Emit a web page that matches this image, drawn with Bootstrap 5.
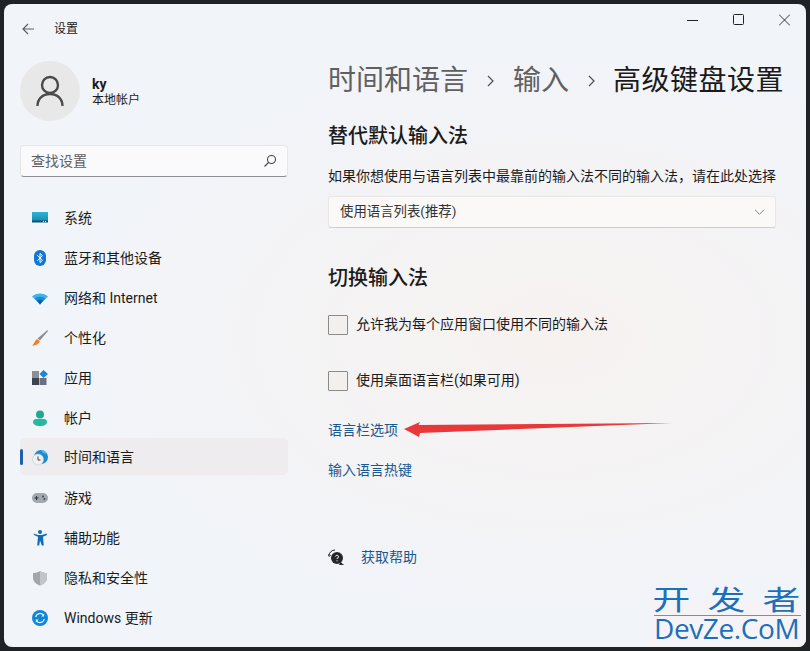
<!DOCTYPE html>
<html lang="zh-CN">
<head>
  <meta charset="UTF-8">
  <title>设置</title>
  <link href="https://cdn.jsdelivr.net/npm/bootstrap@5.3.3/dist/css/bootstrap.min.css" rel="stylesheet">
  <style>
    body {
      background: #1f2326;
      font-family: Roboto, "Noto Sans CJK SC", sans-serif;
      font-size: 14px;
      color: #1b1b1b;
      height: 651px;
      overflow: hidden;
    }

    .win {
      position: relative;
      margin: 4px 4px 4px 4px;
      height: 643px;
      border-radius: 8px;
      overflow: hidden;
      background: radial-gradient(ellipse at 68% 52%, #f7f2f0 0, rgba(247, 242, 240, 0) 62%), #f1f4f9;
    }

    .side-pane {
      width: 300px;
      padding: 0 16px;
    }

    .back-row {
      height: 48px;
      padding: 2px 0 0 2px;
      gap: 20px;
      font-size: 12px;
    }

    .me-row {
      margin-top: 9px;
      height: 60px;
      gap: 12px;
    }

    .me-pic {
      width: 60px;
      height: 60px;
      background: #e8e8e9;
    }

    .me-name {
      font-size: 14px;
      font-weight: 700;
      line-height: 16px;
      margin-top: 1px;
    }

    .me-sub {
      font-size: 12px;
      line-height: 16px;
    }

    .find-box {
      margin-top: 24px;
      height: 32px;
      margin-bottom: 23px;
    }

    .find-box .form-control {
      height: 32px;
      padding: 0 30px 0 10px;
      font-size: 14px;
      border-radius: 4px;
      border: 1px solid #e6e6e8;
      border-bottom-color: #8e8e90;
      background: #fafafc;
      box-shadow: none;
      color: #333;
    }

    .find-box .form-control::placeholder {
      color: #606060;
    }

    .find-ico {
      position: absolute;
      right: 11px;
      top: 9px;
    }

    .side-link {
      position: relative;
      height: 36px;
      margin-bottom: 4px;
      padding: 0 0 0 12px;
      gap: 16px;
      color: #1b1b1b;
      font-size: 14px;
      border-radius: 5px;
    }

    .side-link.on {
      height: 37px;
      margin-top: -2px;
      margin-bottom: 5px;
      padding-top: 2px;
      background: #eeecee;
    }

    .side-link.on::before {
      content: "";
      position: absolute;
      left: 0;
      top: 11px;
      width: 3px;
      height: 16px;
      border-radius: 2px;
      background: #1a62ac;
    }

    .main-pane {
      min-width: 0;
      padding: 0 30px 0 24px;
    }

    .win-btns {
      height: 32px;
      padding-top: 10px;
      margin-right: -30px;
      padding-right: 16px;
      gap: 35px;
    }

    .crumbs {
      margin-top: 23px;
      height: 44px;
      font-size: 28px;
      line-height: 44px;
      color: #606060;
      white-space: nowrap;
    }

    .crumbs .sep {
      width: 45px;
      flex-shrink: 0;
    }

    .crumbs .cur {
      color: #1b1b1b;
      margin-left: -1px;
      letter-spacing: .5px;
    }

    .sec-title {
      font-size: 20px;
      font-weight: 500;
      line-height: 28px;
      margin: 0;
      color: #1b1b1b;
    }

    .first-title {
      margin-top: 19px;
    }

    .hint {
      margin: 16px 0 0;
      line-height: 20px;
      white-space: nowrap;
    }

    .lang-pick {
      margin-top: 10px;
      height: 32px;
      padding: 1px 30px 0 11px;
      font-size: 13.4px;
      font-family: Roboto, "Noto Sans CJK SC", sans-serif;
      color: #333;
      border: 1px solid #e8e6e6;
      border-bottom-color: #cfcdcd;
      border-radius: 3px;
      background-color: #fbf9f8;
      background-image: url("data:image/svg+xml,%3Csvg xmlns='http://www.w3.org/2000/svg' viewBox='0 0 12 8'%3E%3Cpath fill='none' stroke='%23777' stroke-width='1' d='M1 1.500l5 5 5-5'/%3E%3C/svg%3E");
      background-position: right 10px center;
      background-size: 11px 8px;
      box-shadow: none;
    }

    .switch-title {
      margin-top: 36px;
    }

    .opt-row {
      height: 20px;
      gap: 8px;
      margin: 0;
      padding: 0;
      min-height: 0;
    }

    .opt-first {
      margin-top: 23px;
    }

    .opt-second {
      margin-top: 36px;
    }

    .opt-row .form-check-label {
      margin-top: -2px;
    }

    .opt-row .form-check-input[type=checkbox] {
      width: 20px;
      height: 20px;
      margin: 0;
      float: none;
      border: 1px solid #8a8a8a;
      border-radius: 1px;
      background-color: #f2efed;
    }

    .plain-link {
      display: block;
      color: #175a92;
      text-decoration: none;
      line-height: 20px;
    }

    .link-first {
      margin-top: 29px;
    }

    .link-second {
      margin-top: 20px;
    }

    .help-row {
      gap: 17px;
      margin-top: 67px;
    }

    .red-arrow {
      position: absolute;
      left: 400px;
      top: 415px;
    }

    .stamp {
      position: absolute;
      right: -4px;
      bottom: -4px;
      width: 160px;
      height: 49px;
      background: #f6f3f6;
    }

    .stamp-box {
      position: absolute;
      left: 650px;
      top: 581px;
      width: 147px;
      color: #1c70ba;
    }

    .stamp-cn {
      height: 31px;
      line-height: 33px;
      font-size: 27px;
      border-bottom: 1px solid #4d9cd6;
      padding: 0 6px 0 4px;
    }

    .stamp-cn span {
      display: inline-block;
      transform: scaleX(1.4);
    }

    .stamp-en {
      font-size: 28px;
      line-height: 25px;
      letter-spacing: -.4px;
      white-space: nowrap;
      font-family: "Open Sans", Roboto, sans-serif;
    }
  </style>
</head>
<body>

<div class="win d-flex">

  <!-- Sidebar -->
  <div class="side-pane flex-shrink-0">
    <div class="back-row d-flex align-items-center">
      <svg width="12" height="12" viewBox="0 0 12 12" fill="none" stroke="#5c5f63" stroke-width="1.2"><path d="M12 6H1M6 1 1 6l5 5"/></svg>
      <span>设置</span>
    </div>

    <div class="me-row d-flex align-items-center">
      <div class="me-pic rounded-circle d-flex align-items-center justify-content-center flex-shrink-0">
        <svg width="28" height="32" viewBox="0 0 28 32" fill="none" stroke="#4a4a4c" stroke-width="2.4"><circle cx="14" cy="10" r="8"/><path d="M1.500 31c0-7 5-12 12.500-12s12.500 5 12.500 12"/></svg>
      </div>
      <div>
        <div class="me-name">ky</div>
        <div class="me-sub">本地帐户</div>
      </div>
    </div>

    <div class="find-box position-relative">
      <input type="text" class="form-control" placeholder="查找设置">
      <svg class="find-ico" width="14" height="14" viewBox="0 0 14 14" fill="none" stroke="#444" stroke-width="1.1"><circle cx="8.500" cy="5.500" r="4"/><path d="M5.500 8.500 1.500 12.500"/></svg>
    </div>

    <nav class="nav flex-column flex-nowrap">
      <a class="nav-link side-link d-flex align-items-center" href="#">
        <svg width="16" height="16" viewBox="0 0 16 16"><defs><linearGradient id="g1" x1="0" y1="0" x2="0" y2="1"><stop offset="0" stop-color="#2fb5d6"/><stop offset="1" stop-color="#1388b0"/></linearGradient></defs><rect y="2" width="16" height="10" fill="url(#g1)"/><rect y="10.500" width="16" height="2" fill="#15506e"/><rect x="11" y="11" width="1" height="1" fill="#bfe"/><rect x="13" y="11" width="1" height="1" fill="#bfe"/></svg>
        <span>系统</span>
      </a>
      <a class="nav-link side-link d-flex align-items-center" href="#">
        <svg width="16" height="16" viewBox="0 0 16 16"><rect x="2" y="0" width="12" height="16" rx="6" fill="#0f78d4"/><path d="M5.200 5.200 10.500 10.300 8 12.600V3.400L10.500 5.700 5.200 10.800" fill="none" stroke="#fff" stroke-width="1"/></svg>
        <span>蓝牙和其他设备</span>
      </a>
      <a class="nav-link side-link d-flex align-items-center" href="#">
        <svg width="16" height="16" viewBox="0 0 16 16"><path d="M0 6.500C4 2.500 12 2.500 16 6.500L8 14.500Z" fill="#3fb4ec"/><path d="M2.800 8.500C5.500 6 10.500 6 13.200 8.500L8 14.500Z" fill="#1b8ad8"/><path d="M5.300 10.600C6.800 9.500 9.200 9.500 10.700 10.600L8 14.500Z" fill="#0f5ea8"/></svg>
        <span>网络和 Internet</span>
      </a>
      <a class="nav-link side-link d-flex align-items-center" href="#">
        <svg width="16" height="16" viewBox="0 0 16 16"><path d="M15.500 0 16 1 8 10.500 5.500 8.500Z" fill="#8d8f93"/><path d="M5 9 7.800 11.200C7 14 3.500 15.500 0 15.500 2.500 14 2.500 10.500 5 9Z" fill="#f0812a"/></svg>
        <span>个性化</span>
      </a>
      <a class="nav-link side-link d-flex align-items-center" href="#">
        <svg width="16" height="16" viewBox="0 0 16 16"><rect x="0" y="1" width="7" height="7" fill="#8f8d96"/><rect x="0" y="8" width="7" height="7" fill="#3d4450"/><rect x="7.500" y="8" width="7" height="7" fill="#6d7080"/><path d="M11.500 0 16 4 11.500 8 7.500 4Z" fill="#1c86d6"/></svg>
        <span>应用</span>
      </a>
      <a class="nav-link side-link d-flex align-items-center" href="#">
        <svg width="16" height="16" viewBox="0 0 16 16"><circle cx="8" cy="4.500" r="4" fill="#1ea88f"/><path d="M1 12c0-2 1.500-3 3-3h8c1.500 0 3 1 3 3 0 2.500-3 4-7 4s-7-1.500-7-4Z" fill="#27b8a2"/></svg>
        <span>帐户</span>
      </a>
      <a class="nav-link side-link on d-flex align-items-center" href="#">
        <svg width="16" height="16" viewBox="0 0 16 16"><circle cx="9" cy="7" r="7" fill="#1c8ad4"/><path d="M9 0a7 7 0 0 1 6 4L11 3Z" fill="#4cc0e0"/><circle cx="6" cy="9.500" r="5.500" fill="#f1f0f0" stroke="#c9c9cb" stroke-width=".6"/><path d="M6 6.500v3.500h2.500" fill="none" stroke="#444" stroke-width="1"/></svg>
        <span>时间和语言</span>
      </a>
      <a class="nav-link side-link d-flex align-items-center" href="#">
        <svg width="16" height="16" viewBox="0 0 16 16"><rect x="0" y="3" width="16" height="10" rx="5" fill="#a0a8b0"/><path d="M2.500 8h4M4.500 6v4" stroke="#2f3338" stroke-width="1"/><circle cx="11" cy="6.500" r="1" fill="#3f4a55"/><circle cx="12.500" cy="9" r="1" fill="#3f4a55"/></svg>
        <span>游戏</span>
      </a>
      <a class="nav-link side-link d-flex align-items-center" href="#">
        <svg width="16" height="16" viewBox="0 0 16 16"><circle cx="8" cy="2" r="2" fill="#0f6cbd"/><path d="M1.500 3.500 6 5h4l4.500-1.500.5 1.500-4 1.800.8 8.700h-2L8 10.500 7.200 15.500h-2L6 6.800 2 5Z" fill="#0f6cbd"/></svg>
        <span>辅助功能</span>
      </a>
      <a class="nav-link side-link d-flex align-items-center" href="#">
        <svg width="16" height="16" viewBox="0 0 16 16"><path d="M8 1C10 2.500 12.500 3 15 3V8c0 3.500-3 6-7 7.500C4 14 1 11.500 1 8V3C3.500 3 6 2.500 8 1Z" fill="#a3a6aa"/><path d="M8 1C10 2.500 12.500 3 15 3V8c0 3.500-3 6-7 7.500Z" fill="#c3c5c8"/></svg>
        <span>隐私和安全性</span>
      </a>
      <a class="nav-link side-link d-flex align-items-center" href="#">
        <svg width="16" height="16" viewBox="0 0 16 16"><circle cx="8" cy="8" r="8" fill="#1185d8"/><path d="M3.800 7A4.300 4.300 0 0 1 11.500 5.200M12.200 9A4.300 4.300 0 0 1 4.500 10.800" fill="none" stroke="#dff3fd" stroke-width="1.300"/><path d="M12.200 3.500v3h-3ZM3.800 12.500v-3h3Z" fill="#dff3fd"/></svg>
        <span>Windows 更新</span>
      </a>
    </nav>
  </div>

  <!-- Content -->
  <div class="main-pane flex-grow-1">
    <div class="win-btns d-flex justify-content-end align-items-start">
      <svg width="11" height="12" viewBox="0 0 11 12" fill="none" stroke="#222" stroke-width="1"><path d="M0 6.500h11"/></svg>
      <svg width="11" height="12" viewBox="0 0 11 12" fill="none" stroke="#222" stroke-width="1"><rect x=".5" y=".5" width="10" height="10" rx="1"/></svg>
      <svg width="11" height="12" viewBox="0 0 11 12" fill="none" stroke="#222" stroke-width=".9"><path d="M0 .5l11 11M11 .5 0 11.500"/></svg>
    </div>

    <div class="crumbs d-flex align-items-center">
      <span>时间和语言</span>
      <span class="sep d-flex justify-content-center"><svg width="7" height="12" viewBox="0 0 7 12" fill="none" stroke="#555" stroke-width="1.3"><path d="M1 1l5 5-5 5"/></svg></span>
      <span>输入</span>
      <span class="sep d-flex justify-content-center"><svg width="7" height="12" viewBox="0 0 7 12" fill="none" stroke="#555" stroke-width="1.3"><path d="M1 1l5 5-5 5"/></svg></span>
      <span class="cur">高级键盘设置</span>
    </div>

    <h2 class="sec-title first-title">替代默认输入法</h2>
    <p class="hint">如果你想使用与语言列表中最靠前的输入法不同的输入法，请在此处选择</p>
    <select class="form-select lang-pick">
      <option>使用语言列表(推荐)</option>
    </select>

    <h2 class="sec-title switch-title">切换输入法</h2>

    <div class="form-check opt-row opt-first d-flex align-items-center">
      <input class="form-check-input" type="checkbox" id="opt1">
      <label class="form-check-label" for="opt1">允许我为每个应用窗口使用不同的输入法</label>
    </div>
    <div class="form-check opt-row opt-second d-flex align-items-center">
      <input class="form-check-input" type="checkbox" id="opt2">
      <label class="form-check-label" for="opt2">使用桌面语言栏(如果可用)</label>
    </div>

    <a class="plain-link link-first" href="#">语言栏选项</a>
    <a class="plain-link link-second" href="#">输入语言热键</a>

    <div class="help-row d-flex align-items-center">
      <svg width="16" height="16" viewBox="0 0 16 16"><path d="M1 6.500A6 6 0 0 1 7 1" fill="none" stroke="#222" stroke-width="1"/><path d="M0 5 1 7.500 3 6" fill="none" stroke="#222" stroke-width=".8"/><circle cx="9" cy="9" r="6" fill="#23272b"/><path d="M12.500 13 16 16H11Z" fill="#23272b"/><path d="M7.500 7.500A1.500 1.500 0 1 1 9 9.300V10" fill="none" stroke="#fff" stroke-width=".9"/><circle cx="9" cy="11.800" r=".6" fill="#fff"/></svg>
      <a class="plain-link" href="#">获取帮助</a>
    </div>
  </div>

  <!-- Red arrow drawn over the screenshot -->
  <svg class="red-arrow" width="276" height="26" viewBox="0 0 276 26"><path d="M0 10 16 3 14.500 6 268 4 16 14 15 18Z" fill="#e8383a"/></svg>

  <div class="stamp"></div>
  <div class="stamp-box">
    <div class="stamp-cn d-flex justify-content-between"><span>开</span><span>发</span><span>者</span></div>
    <div class="stamp-en">DevZe.CoM</div>
  </div>
</div>

<script src="https://cdn.jsdelivr.net/npm/bootstrap@5.3.3/dist/js/bootstrap.bundle.min.js"></script>
</body>
</html>
